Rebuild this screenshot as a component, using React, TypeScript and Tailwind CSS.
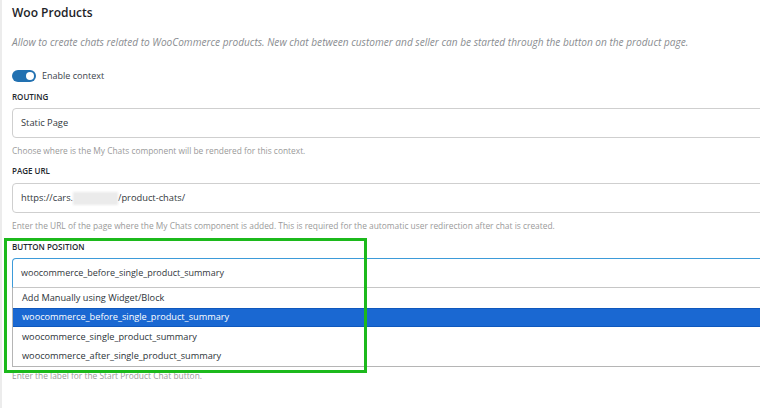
const options = [
  "Add Manually using Widget/Block",
  "woocommerce_before_single_product_summary",
  "woocommerce_single_product_summary",
  "woocommerce_after_single_product_summary",
];

function Label({ children }: { children: React.ReactNode }) {
  return (
    <div className="text-[8px] leading-[12px] font-semibold uppercase text-[#23282d]">{children}</div>
  );
}

function Help({ children }: { children: React.ReactNode }) {
  return <p className="text-[8.4px] leading-[12px] text-[#9a9a9a] whitespace-nowrap">{children}</p>;
}

export default function App() {
  return (
    <div className="relative w-[760px] h-[408px] overflow-hidden bg-white font-['Open_Sans','Noto_Sans',sans-serif]">
      <div className="h-full border-l-2 border-[#ececec] pl-[10px] pt-[5px]">
        <h2 className="text-[12px] leading-[16px] font-semibold text-[#1d2327]">Woo Products</h2>
        <p className="mt-[14px] text-[10.1px] leading-[14px] italic text-[#8a8d91] whitespace-nowrap">
          Allow to create chats related to WooCommerce products. New chat between customer and seller can be started
          through the button on the product page.
        </p>

        <div className="mt-[20px] flex h-[14px] items-center gap-[6px]">
          <span className="flex h-[12px] w-[24px] items-center justify-end rounded-full bg-[#2271b1] px-[2px]">
            <span className="h-[8px] w-[8px] rounded-full bg-white" />
          </span>
          <span className="text-[9px] text-[#3c434a]">Enable context</span>
        </div>

        <div className="mt-[8px]">
          <Label>Routing</Label>
        </div>
        <div className="mt-[5px] flex h-[30px] w-[900px] items-center rounded-[4px] border border-[#cfcfcf] pl-[8px] text-[9.3px] text-[#32373c]">
          Static Page
        </div>
        <div className="mt-[7px]">
          <Help>Choose where is the My Chats component will be rendered for this context.</Help>
        </div>

        <div className="mt-[8px]">
          <Label>Page URL</Label>
        </div>
        <div className="mt-[6px] flex h-[30px] w-[900px] items-center rounded-[4px] border border-[#cfcfcf] pl-[8px] text-[9.3px] text-[#32373c]">
          <span>https://cars.</span>
          <span className="inline-block h-[13px] w-[45px] bg-[#ebebeb] blur-[1px]" />
          <span>/product-chats/</span>
        </div>
        <div className="mt-[7px]">
          <Help>
            Enter the URL of the page where the My Chats component is added. This is required for the automatic user
            redirection after chat is created.
          </Help>
        </div>

        <div className="mt-[9px]">
          <Label>Button Position</Label>
        </div>
        <div className="relative mt-[5px] w-[900px]">
          <div className="flex h-[30px] items-center rounded-t-[4px] border border-[#3d9bd9] border-b-[#c6c6c6] pl-[8px] text-[9px] text-[#32373c]">
            woocommerce_before_single_product_summary
          </div>
          <ul className="absolute left-0 top-full z-10 w-full border border-t-0 border-[#b5b5b5] bg-white text-[9.2px]">
            {options.map((o, i) => (
              <li
                key={o}
                className={
                  i === 1
                    ? "flex h-[19.5px] items-center border-y border-[#0f58bd] bg-[#1a68d2] pl-[9px] text-white"
                    : "flex h-[19.5px] items-center pl-[9px] text-[#2c3338]"
                }
              >
                {o}
              </li>
            ))}
          </ul>
        </div>

        {/* button label input, covered by the open list */}
        <div className="h-[82px] pt-[24px]">
          <div className="h-[30px] w-[900px] rounded-[4px] border border-[#cfcfcf]" />
        </div>
        <Help>Enter the label for the Start Product Chat button.</Help>
      </div>

      {/* annotation frame */}
      <div className="absolute left-[4px] top-[238px] z-20 h-[135px] w-[363px] border-[3px] border-[#1cb91c]" />
    </div>
  );
}
